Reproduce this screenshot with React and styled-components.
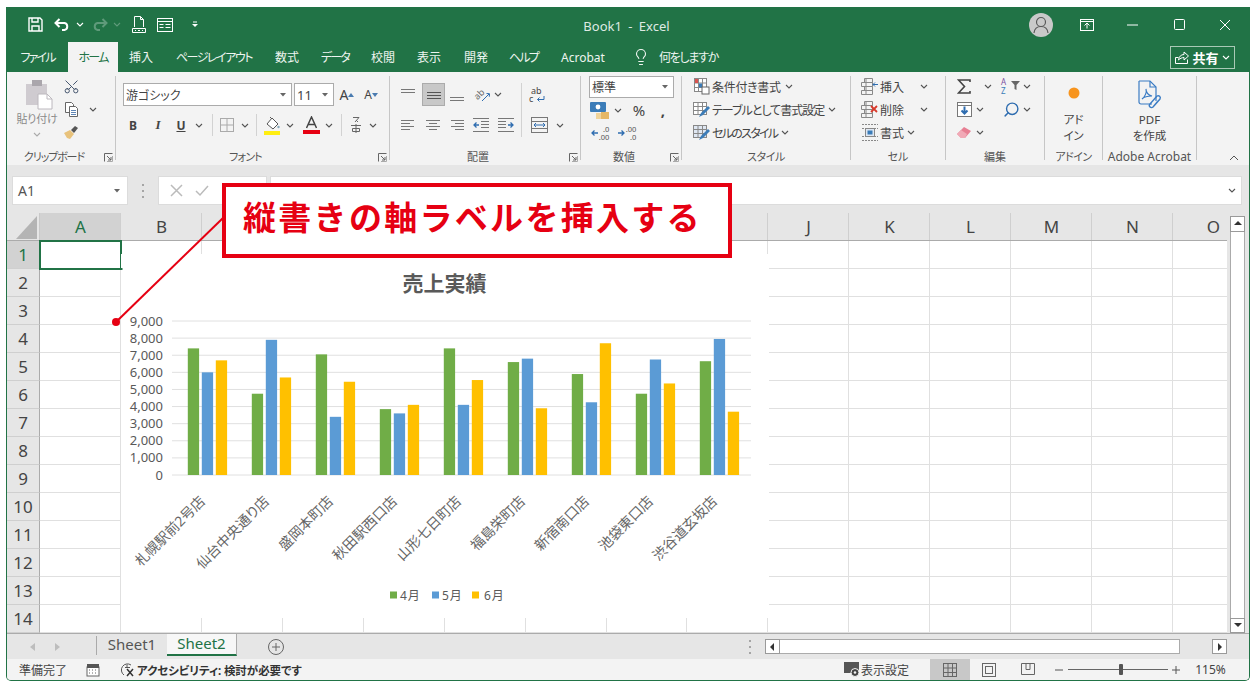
import React from 'react';
import styled, { createGlobalStyle } from 'styled-components';
import { Scissors, Search, Lightbulb } from 'lucide-react';

const Global = createGlobalStyle`
  html, body { margin: 0; padding: 0; background: #fff; }
  * { box-sizing: border-box; }
  body { font-family: "Noto Sans", "Noto Sans CJK JP", sans-serif; font-feature-settings: "palt"; color: #444; }
`;

const Window = styled.div`
  position: relative; width: 1244px; height: 674px; margin: 7px 0 0 6px;
  background: #e6e6e6; border: 1px solid #217346; border-top: 0; border-radius: 0 0 5px 5px; overflow: hidden;
  display: flex; flex-direction: column;
`;
const TitleBar = styled.div`
  height: 35px; background: #217346; display: grid; grid-template-columns: 1fr auto 1fr; align-items: center; color: #dfeae3;
`;
const Qat = styled.div`display: flex; align-items: center; padding-left: 19px;`;
const Title = styled.div`font-size: 13px; word-spacing: 3px; padding-top: 3px; margin-right: 3px;`;
const Controls = styled.div`display: flex; justify-content: flex-end; align-items: center; padding-right: 1px;`;
const Slot = styled.span`
  display: inline-flex; align-items: center; justify-content: center; flex: none;
  width: ${p => p.$w}px; margin-left: ${p => p.$ml || 0}px; height: ${p => p.$h ? p.$h + 'px' : 'auto'};
  background: ${p => p.$bg || 'transparent'}; border: ${p => p.$bd ? `1px solid ${p.$bd}` : '0'};
`;
const MirrorSlot = styled(Slot)`transform: scaleX(-1);`;
const Avatar = styled.span`
  width: 24px; height: 24px; border-radius: 50%; background: #c9c9c9; display: flex; align-items: center; justify-content: center;
`;
const TabBar = styled.div`height: 30px; background: #217346; display: flex; align-items: stretch;`;
const Tab = styled.div`
  width: ${p => p.$w}px; flex: none; display: flex; align-items: center; justify-content: center; font-size: 12px; white-space: nowrap;
  letter-spacing: ${p => p.$ls || 0}px; word-spacing: -2px;
  color: ${p => p.$active ? '#217346' : '#eef5f0'}; background: ${p => p.$active ? '#f3f3f3' : 'transparent'};
`;
const TellMe = styled.div`display: flex; align-items: center; gap: 9px; margin-left: 13px; color: #eef5f0; font-size: 12px; letter-spacing: -1.3px;`;
const ShareButton = styled.div`
  margin: 4px 14px 3px auto; width: 65px; border: 1px solid #a9c9b6; color: #fff; display: flex; align-items: center; justify-content: center; gap: 3px;
  font-size: 13px; font-weight: 700;
`;
const Ribbon = styled.div`height: 93px; background: #f3f3f3; display: flex; align-items: stretch; flex: none;`;
const Group = styled.div`width: ${p => p.$w}px; flex: none; display: flex; flex-direction: column;`;
const GroupBody = styled.div`height: 75px; padding-top: ${p => p.$pt ?? 3}px; display: ${p => p.$row ? 'flex' : 'block'};`;
const GroupFoot = styled.div`height: 18px; padding-top: 2px; display: flex; align-items: center; font-size: ${p => p.$fs || 11}px; color: #555; line-height: 16px;`;
const FootText = styled.span`flex: 1; text-align: center; white-space: nowrap; letter-spacing: ${p => p.$ls || 0}px;`;
const GroupSep = styled.div`width: 1px; flex: none; margin: 4px 0 5px; background: #c6c6c6;`;
const ToolRow = styled.div`display: flex; align-items: center; height: ${p => p.$h || 23}px; margin-top: ${p => p.$mt || 0}px; white-space: nowrap; font-size: 12px; color: #444;`;
const PasteCol = styled.div`
  width: 55px; padding-left: 5px; display: flex; flex-direction: column; align-items: center; font-size: 11px; color: #8a8a8a; line-height: 14px; white-space: nowrap; letter-spacing: -.2px;
`;
const PasteIcon = styled.span`display: flex; margin-left: 4px;`;
const PasteLabel = styled.span`margin-top: 2px;`;
const PasteChev = styled.span`margin-top: 6px; display: flex;`;
const ClipTools = styled.div`margin-top: -4px;`;
const Select = styled.div`
  width: ${p => p.$w}px; height: ${p => p.$h || 23}px; margin-left: ${p => p.$ml || 0}px; flex: none;
  background: #fff; border: 1px solid #ababab; display: flex; align-items: center; justify-content: space-between; padding: 0 5px 0 2px; font-size: ${p => p.$fs || 12}px; color: #444;
`;
const VSep = styled.span`width: 1px; height: ${p => p.$h || 22}px; margin-left: ${p => p.$ml || 0}px; background: #d2d2d2; flex: none; align-self: flex-start;`;
const RowText = styled.span`font-size: 12px; width: ${p => p.$w ? p.$w + 'px' : 'auto'}; flex: none; letter-spacing: ${p => p.$ls || 0}px;`;
const Letter = styled.span`
  font-size: ${p => p.$fs || 12}px; font-weight: ${p => p.$b ? 700 : 400}; font-style: ${p => p.$i ? 'italic' : 'normal'};
  text-decoration: ${p => p.$u ? 'underline' : 'none'}; color: #444; font-family: ${p => p.$serif ? '"Liberation Serif", serif' : 'inherit'};
`;
const LargeCol = styled.div`display: flex; flex-direction: column; align-items: center; font-size: 11.5px; line-height: 16px; color: #444; padding-top: ${p => p.$pt}px; text-align: center;`;
const LargeIcon = styled.div`height: ${p => p.$h}px; display: flex; align-items: center; margin-bottom: ${p => p.$mb}px;`;
const Collapse = styled.div`flex: 1; display: flex; justify-content: flex-end; align-items: flex-end; padding: 0 10px 4px 0;`;

const FormulaArea = styled.div`height: 48px; flex: none; background: #e6e6e6; padding: 11px 7px 8px 5px; display: flex; align-items: stretch;`;
const NameBox = styled.div`width: 116px; background: #fff; border: 1px solid #dcdcdc; display: flex; align-items: center; justify-content: space-between; padding: 0 7px 0 5px; font-size: 14px; color: #555;`;
const Dots = styled.div`width: 30px; display: flex; align-items: center; justify-content: center; margin-right: 0;`;
const FxBox = styled.div`width: 109px; background: #fff; border: 1px solid #dcdcdc; display: flex; align-items: center; gap: 12px; padding-left: 11px;`;
const FormulaInput = styled.div`flex: 1; margin-left: 3px; background: #fff; border: 1px solid #dcdcdc; display: flex; align-items: center; justify-content: flex-end; padding-right: 5px;`;

const SheetArea = styled.div`height: 420px; flex: none; display: flex;`;
const SheetMain = styled.div`width: 1220px; flex: none; display: flex; flex-direction: column; overflow: hidden;`;
const Columns = styled.div`height: 28px; display: flex; flex: none; border-bottom: 1px solid #ababab;`;
const Corner = styled.div`width: 33px; flex: none; display: flex; align-items: flex-end; justify-content: flex-end; padding: 0 2px 1px 0; border-right: 1px solid #c9c9c9;`;
const ColHead = styled.div`
  width: ${p => p.$w}px; flex: none; display: flex; align-items: center; justify-content: center; font-size: 17px; padding-left: 1px; color: ${p => p.$active ? '#217346' : '#444'};
  background: ${p => p.$active ? '#d2d2d2' : 'transparent'}; border-right: 1px solid #cfcfcf; overflow: hidden;
`;
const Row = styled.div`display: flex; height: 28px; flex: none;`;
const RowHead = styled.div`
  width: 33px; flex: none; display: flex; align-items: center; justify-content: center; font-size: 17px; color: ${p => p.$active ? '#217346' : '#444'};
  background: ${p => p.$active ? '#d2d2d2' : '#e6e6e6'}; border-right: 1px solid #ababab; border-bottom: 1px solid #cfcfcf; overflow: hidden;
`;
const Cell = styled.div`
  width: ${p => p.$w}px; flex: none; background: #fff; border-right: 1px solid #e0e0e0; border-bottom: 1px solid #e0e0e0;
  outline: ${p => p.$active ? '2px solid #217346' : 'none'}; outline-offset: -1px; position: relative; z-index: ${p => p.$active ? 1 : 0};
`;
const VScroll = styled.div`width: 22px; flex: none; padding: 3px 4px 0 3px; display: flex; flex-direction: column;`;
const ScrollBtn = styled.div`width: 15px; height: ${p => p.$h}px; margin-left: ${p => p.$ml || 0}px; flex: none; background: #fff; border: 1px solid #9a9a9a; display: flex; align-items: center; justify-content: center;`;
const VTrack = styled.div`flex: 1; background: #fff; border-left: 1px solid #ababab; border-right: 1px solid #ababab; width: 15px;`;

const SheetBar = styled.div`height: 26px; flex: none; background: #e6e6e6; border-top: 1px solid #ababab; display: flex; align-items: stretch;`;
const SheetTab = styled.div`
  width: 70px; flex: none; display: flex; align-items: center; justify-content: center; font-size: 15px; padding-bottom: 2px;
  color: ${p => p.$active ? '#217346' : '#555'}; background: ${p => p.$active ? '#f7f7f7' : 'transparent'};
  border-bottom: ${p => p.$active ? '2px solid #217346' : '0'}; margin-bottom: 3px;
  border-right: ${p => p.$active ? '1px solid #ababab' : '0'};
`;
const NavSep = styled.span`width: 1px; background: #aaa; margin: 2px 0 4px 32px; flex: none;`;
const HScroll = styled.div`display: flex; align-items: center; margin-left: 10px; width: 462px; flex: none;`;
const HTrack = styled.div`width: 400px; height: 15px; background: #fff; border: 1px solid #ababab; border-left: 0; flex: none;`;

const StatusBar = styled.div`height: 21px; flex: none; background: #f3f3f3; display: flex; align-items: center; font-size: 12px; color: #444; padding-left: 12px; white-space: nowrap;`;
const A11y = styled.span`font-weight: 700; font-size: 11.5px; margin-left: 2px; color: #333; letter-spacing: -.1px;`;
const StatusRight = styled.div`margin-left: auto; padding-right: 22px; display: flex; align-items: center; height: 100%;`;
const ViewButton = styled.div`width: ${p => p.$w}px; height: 100%; margin-left: ${p => p.$ml || 0}px; flex: none; background: ${p => p.$active ? '#c8c8c8' : 'transparent'}; display: flex; align-items: center; justify-content: center;`;
const Slider = styled.div`position: relative; width: 100px; height: 1px; background: #666; margin-left: 3px; flex: none;`;
const SliderThumb = styled.span`position: absolute; left: 51px; top: -5px; width: 4px; height: 11px; background: #555; border-radius: 1px;`;

const ChartBox = styled.div`position: absolute; left: 114px; top: 247px; width: 648px; height: 364px; background: #fff; z-index: 2;`;
const ChartSvg = styled.svg`display: block; width: 100%; height: 100%; font-family: "Noto Sans", "Noto Sans CJK JP", sans-serif;`;
const Leader = styled.svg`position: absolute; left: 93px; top: 193px; width: 130px; height: 130px; z-index: 3; overflow: visible;`;
const Callout = styled.div`
  position: absolute; left: 215px; top: 176px; width: 510px; height: 75px; background: #fff; border: 4px solid #e60012; z-index: 4;
  display: flex; align-items: center; padding: 0 0 9px 17px; color: #e60012; font-size: 33px; font-weight: 700; letter-spacing: 2.3px; white-space: nowrap;
  font-family: "Noto Sans CJK JP", sans-serif; font-feature-settings: normal;
`;
const IconSvg = styled.svg`overflow: visible;`;
const DecimalText = styled.span`
  display: flex; flex-direction: column; align-items: flex-end; font-size: 7.5px; line-height: 8px; color: #555; font-weight: 400;
`;
const DecimalWrap = styled.span`display: flex; align-items: center; gap: 1px;`;

const Chev = ({ c = '#555' }) => (
  <svg width="8" height="5" viewBox="0 0 8 5"><polyline points="1,1 4,4 7,1" fill="none" stroke={c} strokeWidth="1.1" /></svg>
);
const MiniDown = () => (
  <svg width="6" height="4" viewBox="0 0 6 4"><polygon points="0,0 6,0 3,3.500" fill="#666" /></svg>
);
const Launcher = () => (
  <Slot $w={14}>
    <svg width="9" height="9" viewBox="0 0 9 9"><path d="M.5 8.5V.5h8M3 3l4 4M7 4v3H4" fill="none" stroke="#666" /><path d="M8.5 3v5.5H3" fill="none" stroke="#aaa" /></svg>
  </Slot>
);
const Lines = ({ rows, c = '#777', w = 16, h = 16 }) => (
  <svg width={w} height={h} viewBox={`0 0 ${w} ${h}`}>
    {rows.map(([a, b, y], i) => <line key={i} x1={a} x2={b} y1={y + .5} y2={y + .5} stroke={c} />)}
  </svg>
);
const Save = () => (
  <svg width="15" height="15" viewBox="0 0 15 15" fill="none" stroke="#fff" strokeWidth="1.4">
    <path d="M1 1h11l2 2v11H1z" /><path d="M4 1v4h6V1M4 14V9h7v5" /></svg>
);
const Undo = ({ c = '#fff' }) => (
  <svg width="16" height="13" viewBox="0 0 16 13" fill="none" stroke={c} strokeWidth="2"><path d="M1.5 5h9a3.6 3.6 0 0 1 0 7H8" /><path d="M5.5 1 1.5 5l4 4" /></svg>
);
const NewDoc = () => (
  <svg width="14" height="17" viewBox="0 0 14 17" fill="none" stroke="#fff"><path d="M2.5 11V.5h6l3 3V11M8.5.5v3h3" /><path d="M.5 12.5h13v4H.5z" /><path d="M3 14.5h1M6 14.5h2M10 14.5h1" /></svg>
);
const FormIcon = () => (
  <svg width="16" height="14" viewBox="0 0 16 14" fill="none" stroke="#fff"><rect x=".5" y=".5" width="15" height="13" /><path d="M.5 3.5h15M8.5 6.5h5M8.5 9.5h5M2.5 6.5h4M2.5 9.5h4" /></svg>
);
const ShareIcon = () => (
  <svg width="14" height="13" viewBox="0 0 14 13" fill="none" stroke="#fff"><path d="M.5 6.500h3M.5 6.500v6h12v-4" /><path d="M3.500 9C4 5.500 6 3.500 9 3.500V1l4.500 4L9 9V6.500C7 6.500 5 7.500 3.500 9z" /></svg>
);
const Paste = () => (
  <svg width="27" height="30" viewBox="0 0 27 30"><path d="M0 4h21v21H0z" fill="#cfcbd0" /><rect x="6" y="0" width="10" height="6" fill="#aaa6ac" /><path d="M12 14h9l5 5v10H12z" fill="#fff" stroke="#bcb8be" /><path d="M21 14v5h5" fill="none" stroke="#bcb8be" /></svg>
);
const Copy = () => (
  <svg width="15" height="15" viewBox="0 0 15 15" fill="#fff" stroke="#666"><path d="M1.5.5h6l2 2v8h-8z" /><path d="M5.5 4.5h6l2 2v8h-8z" /><path d="M7 8.5h5M7 10.5h5M7 12.5h5" stroke="#5f86b5" /></svg>
);
const Brush = () => (
  <svg width="16" height="15" viewBox="0 0 16 15"><path d="M1 8l6-3 4 4-4 5-3-1z" fill="#e8c27b" /><path d="M8 5l4-4 3 2-4 5z" fill="#555" /></svg>
);
const Borders = () => (
  <svg width="14" height="14" viewBox="0 0 14 14" fill="none" stroke="#aaa"><rect x=".5" y=".5" width="13" height="13" /><path d="M7 .5v13M.5 7h13" /></svg>
);
const Fill = () => (
  <svg width="18" height="19" viewBox="0 0 18 19"><path d="M4 8l5-6 6 6-5 5z" fill="#fff" stroke="#555" /><path d="M7 1l2 2" stroke="#555" /><circle cx="15.5" cy="11" r="1.2" fill="#8ab" /><rect x="1" y="15" width="16" height="4" fill="#ffee11" /></svg>
);
const FontColor = () => (
  <svg width="17" height="19" viewBox="0 0 17 19"><path d="M3.5 12 8.5 1l5 11M5.5 8.5h6" fill="none" stroke="#444" strokeWidth="1.5" /><rect x="0" y="14" width="17" height="4" fill="#e60012" /></svg>
);
const GrowFont = ({ down }) => (
  <svg width="6" height="4" viewBox="0 0 6 4"><polygon points={down ? '0,0 6,0 3,4' : '0,4 6,4 3,0'} fill="#4a7bb0" /></svg>
);
const Ruby = () => (
  <svg width="12" height="18" viewBox="0 0 12 18" fill="none" stroke="#666"><path d="M3 1.5h6L5 6M6 4l2 2" /><path d="M1 9.5h10M6 8v9M2.5 12.5h7v3h-7z" /></svg>
);
const Orient = () => (
  <IconSvg width="18" height="18" viewBox="0 0 18 18" fill="none" stroke="#666"><text x="2" y="12" fontSize="9" fill="#666" stroke="none" transform="rotate(-45 6 10)">ab</text><path d="M9 15 16 8M13.5 7.500l3 .2-.2 3" stroke="#2f6db0" /></IconSvg>
);
const Wrap = () => (
  <IconSvg width="18" height="18" viewBox="0 0 18 18"><text x="3" y="8" fontSize="9" fill="#444">ab</text><text x="1" y="16" fontSize="9" fill="#444">c</text><path d="M16 10v3.5H9.5M11.5 11.5l-2 2 2 2" fill="none" stroke="#2f6db0" /></IconSvg>
);
const Indent = ({ flip }) => (
  <svg width="16" height="14" viewBox="0 0 16 14" fill="none" stroke="#777" style={flip ? { transform: 'scaleX(-1)' } : undefined}>
    <path d="M0 .5h16M0 13.5h16M8 3.5h8M8 6.5h8M8 9.5h8" /><path d="M6 7H1M3.5 4.5 1 7l2.5 2.5" stroke="#2f6db0" strokeWidth="1.3" /></svg>
);
const Merge = () => (
  <svg width="17" height="16" viewBox="0 0 17 16" fill="none" stroke="#777"><rect x=".5" y=".5" width="16" height="15" /><path d="M.5 4.5h16M.5 11.5h16" /><path d="M3 8h11M5 6 3 8l2 2M12 6l2 2-2 2" stroke="#2f6db0" /></svg>
);
const Currency = () => (
  <svg width="20" height="17" viewBox="0 0 20 17"><rect x="0" y="0" width="16" height="10" rx="1" fill="#3b7cb8" /><circle cx="8" cy="5" r="2.4" fill="#fff" /><path d="M11 10h8v7h-8z" fill="#e5b766" /><path d="M6 11h5v6H6z" fill="#f0d49b" /></svg>
);
const DecArrow = ({ right }) => (
  <svg width="7" height="6" viewBox="0 0 7 6" fill="none" stroke="#2f6db0" strokeWidth="1.3">
    {right ? <path d="M0 3h6M3.500.5 6 3 3.500 5.500" /> : <path d="M7 3H1M3.500.5 1 3l2.500 2.500" />}
  </svg>
);
const CondFormat = () => (
  <svg width="16" height="17" viewBox="0 0 16 17" fill="none" stroke="#888"><rect x=".5" y=".5" width="12" height="13" fill="#fff" /><path d="M.5 5h12M.5 9.500h12M4.500.5v13M8.500.5v13" /><rect x="1" y="1" width="3" height="4" fill="#d9534f" stroke="none" /><rect x="5" y="5.500" width="3" height="4" fill="#3b7cb8" stroke="none" /><rect x="8" y="9" width="7" height="7" fill="#fff" stroke="#666" /></svg>
);
const TableFormat = ({ blue }) => (
  <svg width="18" height="16" viewBox="0 0 18 16" fill="none" stroke="#888"><rect x=".5" y=".5" width="13" height="12" fill={blue ? '#dfe7f2' : '#fff'} /><path d="M.5 4.500h13M.5 8.500h13M5 .5v12M9.500.5v12" /><path d="M6 15l2-4 7-7 2 2-7 7z" fill="#3b7cb8" stroke="none" /></svg>
);
const CellInsert = ({ del }) => (
  <svg width="18" height="17" viewBox="0 0 18 17" fill="none" stroke="#888"><path d="M3.500.5h8v4h-8zM.5 4.500h11v4H.5zM3.500 8.500h8v4h-8zM.5 12.500h11v4H.5zM5 0v17" />
    {del ? <path d="M10 5l6 6M16 5l-6 6" stroke="#d8392b" strokeWidth="1.8" /> : <path d="M17 6.500h-5M14 4.500l-2 2 2 2" stroke="#2f6db0" />}</svg>
);
const CellFormat = () => (
  <svg width="18" height="17" viewBox="0 0 18 17" fill="none" stroke="#888"><path d="M1 .5h16M1 4.500h16M1 12.500h16M1 16.500h16" strokeDasharray="2 1" /><rect x="4.500" y="4.500" width="9" height="8" fill="#dfe7f2" /><rect x="6.500" y="6.500" width="5" height="4" fill="#3b7cb8" stroke="none" /></svg>
);
const Sigma = () => (
  <svg width="14" height="15" viewBox="0 0 14 15" fill="none" stroke="#444" strokeWidth="1.6"><path d="M13 3V1H1.500L7.500 7.500 1.500 14H13v-2" /></svg>
);
const SortIcon = () => (
  <IconSvg width="20" height="17" viewBox="0 0 20 17"><text x="0" y="7" fontSize="8" fill="#7a4fa0">A</text><text x="0" y="16" fontSize="8" fill="#3b7cb8">Z</text><path d="M10 3h9l-3.500 4v5l-2-1V7z" fill="#666" /></IconSvg>
);
const FillDown = () => (
  <svg width="15" height="15" viewBox="0 0 15 15"><rect x=".5" y=".5" width="14" height="14" fill="#fff" stroke="#777" /><path d="M.5 3.500h14" stroke="#777" /><path d="M7.500 4.500v7M4.500 8.500l3 3 3-3" fill="none" stroke="#2f6db0" strokeWidth="2" /></svg>
);
const Eraser = () => (
  <svg width="16" height="13" viewBox="0 0 16 13"><path d="M1 8l7-7 7 4-6 7H5z" fill="#e77f93" /><path d="M1 8l4-4 6 4-2 4H5z" fill="#f1a9b6" /></svg>
);
const AcrobatIcon = () => (
  <svg width="28" height="30" viewBox="0 0 28 30" fill="none" stroke="#3b7cc4" strokeWidth="1.2"><path d="M3 1h11l6 6v11M20 18v3M16 24H5a2 2 0 0 1-2-2V1" /><path d="M14 1v6h6" /><path d="M6 19c3-2 5-7 4-10 0 3 2 6 6 7-3 0-7 0-10 3z" /><path d="M17 27l7-8a2.200 2.200 0 0 0-3-3l-7 8a2 2 0 0 0 3 3l5-6" strokeWidth="1.400" /></svg>
);
const Grip = () => (
  <svg width="4" height="16" viewBox="0 0 4 16" fill="#a5a5a5"><rect x="1" y="1" width="2" height="2" /><rect x="1" y="7" width="2" height="2" /><rect x="1" y="13" width="2" height="2" /></svg>
);
const Tri = ({ d }) => {
  const p = { up: '1,6 5,2 9,6', down: '1,2 5,6 9,2', left: '6,1 2,5 6,9', right: '3,1 7,5 3,9' }[d];
  return <svg width="10" height="10" viewBox="0 0 10 10"><polygon points={p} fill="#333" /></svg>;
};

const colW = [81, 81, 81, 81, 81, 81, 81, 80, 81, 81, 81, 81, 81, 81, 81];
const colHeads = ['A', 'B', '', '', '', '', '', '', '', 'J', 'K', 'L', 'M', 'N', 'O'];
const rowNums = Array.from({ length: 14 }, (_, i) => i + 1);
const stores = ['札幌駅前2号店', '仙台中央通り店', '盛岡本町店', '秋田駅西口店', '山形七日町店', '福島栄町店', '新宿南口店', '池袋東口店', '渋谷道玄坂店'];
const data = [
  [7400, 6000, 6700], [4750, 7900, 5700], [7050, 3400, 5450], [3850, 3600, 4100], [7400, 4100, 5550],
  [6600, 6800, 3900], [5900, 4250, 7700], [4750, 6750, 5350], [6650, 7950, 3700],
];
const series = ['#70ad47', '#5b9bd5', '#ffc000'];
const axis = [9000, 8000, 7000, 6000, 5000, 4000, 3000, 2000, 1000, 0];
const yOf = v => 475 - v * 154 / 9000;
const legend = [[390, 400, '4月', 0], [432, 442, '5月', 1], [472, 484, '6月', 2]];

const Chart = () => (
  <ChartSvg viewBox="121 254 648 364">
    <text x="444.500" y="291" textAnchor="middle" fontSize="21" fontWeight="700" fill="#595959">売上実績</text>
    {axis.map(v => (
      <g key={v}>
        <line x1="172" x2="751" y1={yOf(v)} y2={yOf(v)} stroke="#e0e0e0" />
        <text x="163" y={yOf(v) + 4.500} textAnchor="end" fontSize="13" fill="#595959">{v.toLocaleString('en-US')}</text>
      </g>
    ))}
    {data.map((g, i) => g.map((v, s) => (
      <rect key={`${i}-${s}`} x={207.3 + 64 * i - 19.500 + 14 * s} y={yOf(v)} width="11.300" height={475 - yOf(v)} fill={series[s]} />
    )))}
    {stores.map((name, i) => {
      const x = 206 + 64 * i, y = 502;
      return <text key={name} x={x} y={y} textAnchor="end" fontSize="14" fill="#666" transform={`rotate(-45 ${x} ${y})`}>{name}</text>;
    })}
    {legend.map(([sx, tx, t, s]) => (
      <g key={t}>
        <rect x={sx} y="591.500" width="7" height="7" fill={series[s]} />
        <text x={tx} y="600" fontSize="12" letterSpacing="1" fill="#595959">{t}</text>
      </g>
    ))}
    <rect x="121" y="268" width="1.500" height="2" fill="#217346" />
  </ChartSvg>
);

export default function App() {
  return (
    <>
      <Global />
      <Window>
        <TitleBar>
          <Qat>
            <Slot $w={18}><Save /></Slot>
            <Slot $w={24} $ml={6}><Undo /></Slot>
            <Slot $w={12}><Chev c="#fff" /></Slot>
            <MirrorSlot $w={24} $ml={2}><Undo c="#5f9a7a" /></MirrorSlot>
            <Slot $w={10}><Chev c="#5f9a7a" /></Slot>
            <Slot $w={22} $ml={6}><NewDoc /></Slot>
            <Slot $w={22} $ml={4}><FormIcon /></Slot>
            <Slot $w={14} $ml={12}>
              <svg width="8" height="7" viewBox="0 0 8 7"><path d="M2 1h4" stroke="#fff" /><polygon points="1,3 7,3 4,6" fill="#fff" /></svg>
            </Slot>
          </Qat>
          <Title>Book1 - Excel</Title>
          <Controls>
            <Slot $w={46}>
              <Avatar>
                <svg width="18" height="18" viewBox="0 0 18 18" fill="none" stroke="#5a5a5a" strokeWidth="1.2"><circle cx="9" cy="6" r="4.500" /><path d="M2 17c.5-4.500 3-6.500 7-6.500s6.500 2 7 6.500" /></svg>
              </Avatar>
            </Slot>
            <Slot $w={46}>
              <svg width="14" height="12" viewBox="0 0 14 12" fill="none" stroke="#fff"><rect x=".5" y=".5" width="13" height="11" /><path d="M.5 2.500h13" /><path d="M7 9.500V5M4.500 6.500 7 4l2.500 2.500" /></svg>
            </Slot>
            <Slot $w={46}><svg width="12" height="2" viewBox="0 0 12 2"><path d="M0 1h11" stroke="#fff" /></svg></Slot>
            <Slot $w={46}><svg width="11" height="11" viewBox="0 0 11 11"><rect x=".5" y=".5" width="10" height="10" rx="1" fill="none" stroke="#fff" /></svg></Slot>
            <Slot $w={46}><svg width="12" height="12" viewBox="0 0 12 12"><path d="M1 1l10 10M11 1 1 11" stroke="#fff" /></svg></Slot>
          </Controls>
        </TitleBar>

        <TabBar>
          <Tab $w={61} $ls={-1.8}>ファイル</Tab>
          <Tab $w={50} $active $ls={-1.7}>ホーム</Tab>
          <Tab $w={46}>挿入</Tab>
          <Tab $w={100} $ls={-1.4}>ページ レイアウト</Tab>
          <Tab $w={46}>数式</Tab>
          <Tab $w={50} $ls={-1.7}>データ</Tab>
          <Tab $w={46}>校閲</Tab>
          <Tab $w={46}>表示</Tab>
          <Tab $w={48}>開発</Tab>
          <Tab $w={47} $ls={-1.7}>ヘルプ</Tab>
          <Tab $w={72}>Acrobat</Tab>
          <TellMe><Lightbulb size={18} strokeWidth={1.5} />何をしますか</TellMe>
          <ShareButton>
            <ShareIcon />
            共有<Chev c="#fff" />
          </ShareButton>
        </TabBar>

        <Ribbon>
          <Group $w={108}>
            <GroupBody $row $pt={8}>
              <PasteCol>
                <PasteIcon><Paste /></PasteIcon>
                <PasteLabel>貼り付け</PasteLabel>
                <PasteChev><Chev c="#aaa" /></PasteChev>
              </PasteCol>
              <ClipTools>
                <ToolRow $h={21}><Slot $w={18}><Scissors size={17} strokeWidth={1.4} color="#46566e" style={{ transform: 'rotate(-90deg)' }} /></Slot></ToolRow>
                <ToolRow $h={24}><Slot $w={18}><Copy /></Slot><Slot $w={8} $ml={9}><Chev /></Slot></ToolRow>
                <ToolRow $h={23}><Slot $w={18}><Brush /></Slot></ToolRow>
              </ClipTools>
            </GroupBody>
            <GroupFoot><FootText $ls={-1.1}>クリップボード</FootText><Launcher /></GroupFoot>
          </Group>
          <GroupSep />
          <Group $w={273}>
            <GroupBody $pt={11}>
              <ToolRow>
                <Select $w={169} $ml={7}>游ゴシック<MiniDown /></Select>
                <Select $w={40} $ml={2} $fs={13}>11<MiniDown /></Select>
                <Slot $w={24} $ml={1}><Letter $fs={14}>A</Letter><GrowFont /></Slot>
                <Slot $w={24}><Letter $fs={12}>A</Letter><GrowFont down /></Slot>
              </ToolRow>
              <ToolRow $h={22} $mt={8}>
                <Slot $w={24} $ml={5}><Letter $b>B</Letter></Slot>
                <Slot $w={24} $ml={1}><Letter $b $i $serif $fs={13}>I</Letter></Slot>
                <Slot $w={22}><Letter $b $u>U</Letter></Slot>
                <Slot $w={14}><Chev /></Slot>
                <VSep $ml={6} />
                <Slot $w={22} $ml={3}><Borders /></Slot>
                <Slot $w={14}><Chev /></Slot>
                <VSep $ml={4} />
                <Slot $w={24} $ml={3}><Fill /></Slot>
                <Slot $w={12}><Chev /></Slot>
                <Slot $w={24} $ml={3}><FontColor /></Slot>
                <Slot $w={12}><Chev /></Slot>
                <VSep $ml={6} />
                <Slot $w={22} $ml={3}><Ruby /></Slot>
                <Slot $w={12}><Chev /></Slot>
              </ToolRow>
            </GroupBody>
            <GroupFoot><FootText $ls={-.8}>フォント</FootText><Launcher /></GroupFoot>
          </Group>
          <GroupSep />
          <Group $w={190}>
            <GroupBody $pt={11}>
              <ToolRow>
                <Slot $w={22} $ml={7}><Lines rows={[[1, 15, 2], [1, 15, 5]]} /></Slot>
                <Slot $w={23} $h={23} $ml={3} $bg="#c8c8c8" $bd="#ababab"><Lines rows={[[1, 15, 5], [1, 15, 8], [1, 15, 11]]} c="#555" /></Slot>
                <Slot $w={22} $ml={1}><Lines rows={[[1, 15, 10], [1, 15, 13]]} /></Slot>
                <Slot $w={22} $ml={3}><Orient /></Slot>
                <Slot $w={10}><Chev /></Slot>
                <VSep $ml={18} $h={54} />
                <Slot $w={22} $ml={4}><Wrap /></Slot>
              </ToolRow>
              <ToolRow $h={22} $mt={8}>
                <Slot $w={22} $ml={7}><Lines rows={[[1, 14, 3], [1, 10, 6], [1, 14, 9], [1, 10, 12]]} /></Slot>
                <Slot $w={22} $ml={3}><Lines rows={[[1, 15, 3], [4, 12, 6], [1, 15, 9], [4, 12, 12]]} /></Slot>
                <Slot $w={22} $ml={2}><Lines rows={[[2, 15, 3], [6, 15, 6], [2, 15, 9], [6, 15, 12]]} /></Slot>
                <Slot $w={22} $ml={2}><Indent /></Slot>
                <Slot $w={22} $ml={3}><Indent flip /></Slot>
                <Slot $w={22} $ml={11}><Merge /></Slot>
                <Slot $w={12} $ml={4}><Chev /></Slot>
              </ToolRow>
            </GroupBody>
            <GroupFoot><FootText>配置</FootText><Launcher /></GroupFoot>
          </Group>
          <GroupSep />
          <Group $w={100}>
            <GroupBody $pt={4}>
              <ToolRow $h={22}><Select $w={85} $h={22} $ml={8}>標準<MiniDown /></Select></ToolRow>
              <ToolRow $h={22} $mt={1}>
                <Slot $w={22} $ml={8}><Currency /></Slot>
                <Slot $w={12} $ml={1}><Chev /></Slot>
                <Slot $w={22} $ml={4}><Letter $fs={15}>%</Letter></Slot>
                <Slot $w={22} $ml={2}><Letter $fs={15} $b>,</Letter></Slot>
              </ToolRow>
              <ToolRow>
                <Slot $w={22} $ml={8}><DecimalWrap><DecArrow /><DecimalText><span>.0</span><span>.00</span></DecimalText></DecimalWrap></Slot>
                <Slot $w={22} $ml={5}><DecimalWrap><DecArrow right /><DecimalText><span>.00</span><span>.0</span></DecimalText></DecimalWrap></Slot>
              </ToolRow>
            </GroupBody>
            <GroupFoot><FootText>数値</FootText><Launcher /></GroupFoot>
          </Group>
          <GroupSep />
          <Group $w={168}>
            <GroupBody>
              <ToolRow><Slot $w={20} $ml={10}><CondFormat /></Slot><RowText $ls={-.3}>条件付き書式</RowText><Slot $w={12} $ml={2}><Chev /></Slot></ToolRow>
              <ToolRow><Slot $w={20} $ml={10}><TableFormat /></Slot><RowText $ls={-1}>テーブルとして書式設定</RowText><Slot $w={12} $ml={2}><Chev /></Slot></ToolRow>
              <ToolRow><Slot $w={20} $ml={10}><TableFormat blue /></Slot><RowText $ls={-1.7}>セルのスタイル</RowText><Slot $w={12} $ml={2}><Chev /></Slot></ToolRow>
            </GroupBody>
            <GroupFoot><FootText $ls={-.4}>スタイル</FootText></GroupFoot>
          </Group>
          <GroupSep />
          <Group $w={94}>
            <GroupBody>
              <ToolRow><Slot $w={20} $ml={9}><CellInsert /></Slot><RowText $w={36}>挿入</RowText><Slot $w={16}><Chev /></Slot></ToolRow>
              <ToolRow><Slot $w={20} $ml={9}><CellInsert del /></Slot><RowText $w={36}>削除</RowText><Slot $w={16}><Chev /></Slot></ToolRow>
              <ToolRow><Slot $w={20} $ml={9}><CellFormat /></Slot><RowText>書式</RowText><Slot $w={12} $ml={1}><Chev /></Slot></ToolRow>
            </GroupBody>
            <GroupFoot><FootText>セル</FootText></GroupFoot>
          </Group>
          <GroupSep />
          <Group $w={98}>
            <GroupBody>
              <ToolRow>
                <Slot $w={22} $ml={7}><Sigma /></Slot>
                <Slot $w={14} $ml={6}><Chev /></Slot>
                <Slot $w={22} $ml={5}><SortIcon /></Slot>
                <Slot $w={10}><Chev /></Slot>
              </ToolRow>
              <ToolRow>
                <Slot $w={22} $ml={7}><FillDown /></Slot>
                <Slot $w={10}><Chev /></Slot>
                <Slot $w={22} $ml={15}><Search size={17} strokeWidth={2} color="#2f6db0" style={{ transform: 'scaleX(-1)' }} /></Slot>
                <Slot $w={10}><Chev /></Slot>
              </ToolRow>
              <ToolRow>
                <Slot $w={22} $ml={7}><Eraser /></Slot>
                <Slot $w={10}><Chev /></Slot>
              </ToolRow>
            </GroupBody>
            <GroupFoot><FootText>編集</FootText></GroupFoot>
          </Group>
          <GroupSep />
          <Group $w={57}>
            <GroupBody $pt={0}>
              <LargeCol $pt={12}>
                <LargeIcon $h={18} $mb={10}>
                  <svg width="14" height="14" viewBox="0 0 14 14"><circle cx="7" cy="7" r="5.500" fill="#f7941d" /></svg>
                </LargeIcon>
                <span>アド</span><span>イン</span>
              </LargeCol>
            </GroupBody>
            <GroupFoot><FootText $ls={-.5}>アドイン</FootText></GroupFoot>
          </Group>
          <GroupSep />
          <Group $w={93}>
            <GroupBody $pt={0}>
              <LargeCol $pt={8}>
                <LargeIcon $h={30} $mb={2}><AcrobatIcon /></LargeIcon>
                <span>PDF</span><span>を作成</span>
              </LargeCol>
            </GroupBody>
            <GroupFoot $fs={12}><FootText>Adobe Acrobat</FootText></GroupFoot>
          </Group>
          <GroupSep />
          <Collapse><svg width="10" height="6" viewBox="0 0 10 6"><polyline points="1,5 5,1 9,5" fill="none" stroke="#555" /></svg></Collapse>
        </Ribbon>

        <FormulaArea>
          <NameBox>A1<MiniDown /></NameBox>
          <Dots><Grip /></Dots>
          <FxBox>
            <svg width="13" height="13" viewBox="0 0 13 13"><path d="M1 1l11 11M12 1 1 12" stroke="#bbb" strokeWidth="1.500" /></svg>
            <svg width="14" height="12" viewBox="0 0 14 12"><path d="M1 6l4 4 8-9" fill="none" stroke="#bbb" strokeWidth="1.500" /></svg>
          </FxBox>
          <FormulaInput><Chev /></FormulaInput>
        </FormulaArea>

        <SheetArea>
          <SheetMain>
            <Columns>
              <Corner><svg width="21" height="23" viewBox="0 0 21 23"><polygon points="21,0 21,23 0,23" fill="#b4b4b4" /></svg></Corner>
              {colHeads.map((c, i) => <ColHead key={i} $w={colW[i]} $active={i === 0}>{c}</ColHead>)}
            </Columns>
            {rowNums.map(r => (
              <Row key={r}>
                <RowHead $active={r === 1}>{r}</RowHead>
                {colW.map((w, i) => <Cell key={i} $w={w} $active={r === 1 && i === 0} />)}
              </Row>
            ))}
          </SheetMain>
          <VScroll>
            <ScrollBtn $h={16}><Tri d="up" /></ScrollBtn>
            <VTrack />
            <ScrollBtn $h={15}><Tri d="down" /></ScrollBtn>
          </VScroll>
        </SheetArea>

        <SheetBar>
          <Slot $w={14} $ml={19}><svg width="6" height="8" viewBox="0 0 6 8"><polygon points="5,0 0,4 5,8" fill="#bdbdbd" /></svg></Slot>
          <Slot $w={14} $ml={10}><svg width="6" height="8" viewBox="0 0 6 8"><polygon points="1,0 6,4 1,8" fill="#bdbdbd" /></svg></Slot>
          <NavSep />
          <SheetTab>Sheet1</SheetTab>
          <SheetTab $active>Sheet2</SheetTab>
          <Slot $w={22} $ml={28}>
            <svg width="16" height="16" viewBox="0 0 16 16" fill="none" stroke="#666"><circle cx="8" cy="8" r="7.500" /><path d="M8 4v8M4 8h8" /></svg>
          </Slot>
          <Slot $w={10} $ml={458}><Grip /></Slot>
          <HScroll>
            <ScrollBtn $h={15}><Tri d="left" /></ScrollBtn>
            <HTrack />
            <ScrollBtn $h={15} $ml={32}><Tri d="right" /></ScrollBtn>
          </HScroll>
        </SheetBar>

        <StatusBar>
          <span>準備完了</span>
          <Slot $w={16} $ml={18}>
            <svg width="14" height="14" viewBox="0 0 14 14"><rect x="1" y="4" width="12" height="9" fill="#fff" stroke="#666" /><rect x="1" y="1" width="12" height="4" fill="#555" /><path d="M3 7h1M6 7h1M9 7h1M3 10h1M6 10h1M9 10h1" stroke="#666" /></svg>
          </Slot>
          <Slot $w={16} $ml={18}>
            <svg width="16" height="15" viewBox="0 0 16 15" fill="none" stroke="#555"><path d="M5 13A6 6 0 1 1 12 3" /><path d="M8 2.500v3M6 5.500h5" /><path d="M8 7l6 7M14 7l-6 7" strokeWidth="1.500" stroke="#333" /></svg>
          </Slot>
          <A11y>アクセシビリティ: 検討が必要です</A11y>
          <StatusRight>
            <Slot $w={18}>
              <svg width="16" height="15" viewBox="0 0 16 15"><rect x="0" y="0" width="15" height="11" fill="#555" /><circle cx="11" cy="10.500" r="4" fill="#444" stroke="#f3f3f3" /><circle cx="11" cy="10.500" r="1.300" fill="#f3f3f3" /></svg>
            </Slot>
            <span>表示設定</span>
            <ViewButton $w={40} $ml={21} $active>
              <svg width="14" height="14" viewBox="0 0 14 14" fill="none" stroke="#666"><rect x=".5" y=".5" width="13" height="13" /><path d="M5 .5v13M9.500.5v13M.5 5h13M.5 9.500h13" /></svg>
            </ViewButton>
            <ViewButton $w={38}>
              <svg width="14" height="14" viewBox="0 0 14 14" fill="none" stroke="#666"><rect x=".5" y=".5" width="13" height="13" /><rect x="3.500" y="3.500" width="7" height="7" /></svg>
            </ViewButton>
            <ViewButton $w={40}>
              <svg width="14" height="14" viewBox="0 0 14 14" fill="none" stroke="#666"><path d="M.5 .5h13v11H.5zM5 .5v6h4v-6" /></svg>
            </ViewButton>
            <Slot $w={12} $ml={5}><svg width="8" height="2" viewBox="0 0 8 2"><path d="M0 1h8" stroke="#555" /></svg></Slot>
            <Slider><SliderThumb /></Slider>
            <Slot $w={12} $ml={2}><svg width="8" height="8" viewBox="0 0 8 8"><path d="M0 4h8M4 0v8" stroke="#555" /></svg></Slot>
            <Slot $w={33} $ml={12}>115%</Slot>
          </StatusRight>
        </StatusBar>

        <ChartBox><Chart /></ChartBox>
        <Leader viewBox="100 200 130 130">
          <line x1="223" y1="218" x2="116" y2="322" stroke="#e60012" strokeWidth="2" />
          <circle cx="116" cy="322" r="4" fill="#e60012" />
        </Leader>
        <Callout>縦書きの軸ラベルを挿入する</Callout>
      </Window>
    </>
  );
}
